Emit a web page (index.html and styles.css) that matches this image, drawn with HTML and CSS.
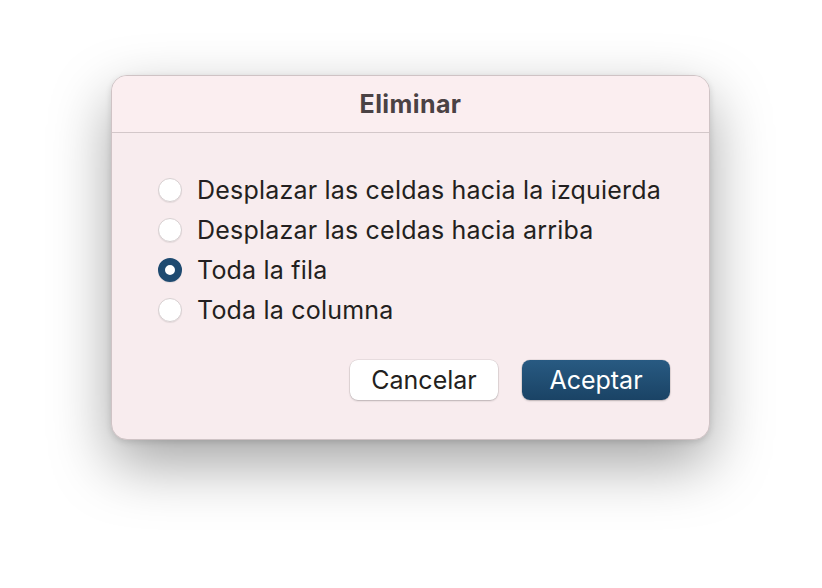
FILE: index.html
```html
<!DOCTYPE html>
<html lang="es">
<head>
  <meta charset="UTF-8">
  <title>Eliminar</title>
  <link rel="stylesheet" href="styles.css">
</head>
<body>
  <div class="stage">
    <div class="dialog">
      <div class="dialog-title">Eliminar</div>
      <div class="dialog-body">
        <div class="options">
          <label class="option"><span class="radio"></span>Desplazar las celdas hacia la izquierda</label>
          <label class="option"><span class="radio"></span>Desplazar las celdas hacia arriba</label>
          <label class="option"><span class="radio checked"></span>Toda la fila</label>
          <label class="option"><span class="radio"></span>Toda la columna</label>
        </div>
        <div class="actions">
          <button class="btn">Cancelar</button>
          <button class="btn btn-primary">Aceptar</button>
        </div>
      </div>
    </div>
  </div>
</body>
</html>
```

FILE: styles.css
```css
html, body {
  margin: 0;
  background: #ffffff;
}

body {
  font-family: Inter, "Noto Sans", sans-serif;
  width: 822px;
  height: 588px;
  overflow: hidden;
}

.stage {
  padding: 75px 0 0 111px;
}

.dialog {
  width: 599px;
  background: #f8ecee;
  border: 1px solid #cfc3c5;
  border-radius: 16px;
  box-sizing: border-box;
  box-shadow: 0 24px 60px rgba(0, 0, 0, 0.36), 0 2px 6px rgba(0, 0, 0, 0.12);
  overflow: hidden;
}

.dialog-title {
  height: 56px;
  line-height: 56px;
  text-align: center;
  font-size: 25px;
  font-weight: 700;
  letter-spacing: 0.4px;
  color: #4a4244;
  background: #fbeef0;
  border-bottom: 1px solid #d3c7c9;
}

.dialog-body {
  padding: 37px 39px 39px 46px;
}

.options {
  display: flex;
  flex-direction: column;
}

.option {
  display: flex;
  align-items: center;
  height: 40px;
  font-size: 25px;
  letter-spacing: 0.2px;
  color: #231f20;
}

.radio {
  width: 24px;
  height: 24px;
  box-sizing: border-box;
  border-radius: 50%;
  background: #ffffff;
  border: 1px solid #d8d0d1;
  box-shadow: 0 1px 1px rgba(0, 0, 0, 0.08);
  margin-right: 15px;
  flex-shrink: 0;
}

.radio.checked {
  background: #ffffff;
  border: 7px solid #1e4a70;
}

.actions {
  display: flex;
  justify-content: flex-end;
  gap: 24px;
  margin-top: 30px;
}

.btn {
  width: 148px;
  height: 40px;
  border-radius: 8px;
  border: none;
  background: #ffffff;
  box-shadow: 0 0 0 0.5px rgba(0, 0, 0, 0.12), 0 1px 2px rgba(0, 0, 0, 0.2);
  font-family: inherit;
  font-size: 25px;
  color: #231f20;
}

.btn-primary {
  background: linear-gradient(#285a82, #1a4365);
  color: #ffffff;
}
```
